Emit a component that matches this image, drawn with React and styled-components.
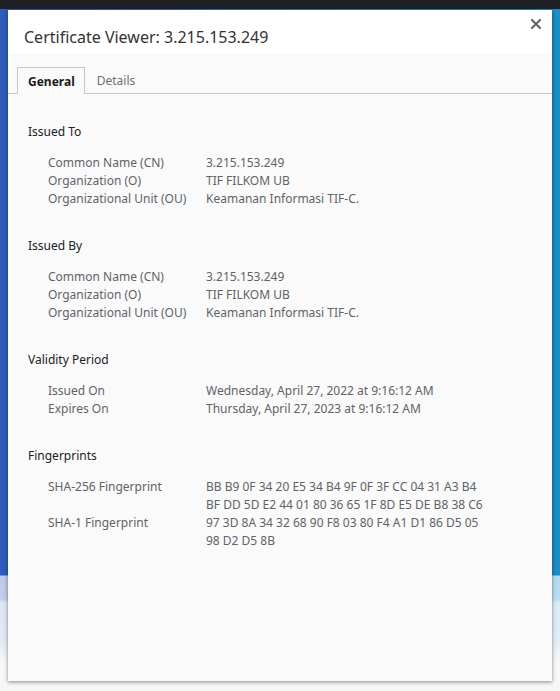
import React from "react";
import styled, { createGlobalStyle } from "styled-components";

const GlobalStyle = createGlobalStyle`
  html, body {
    margin: 0;
    padding: 0;
    background: #f5f5f5;
  }
  body {
    font-family: "Noto Sans", "Open Sans", sans-serif;
  }
`;

const Page = styled.div`
  width: 560px;
  height: 691px;
  overflow: hidden;
  display: flex;
  flex-direction: column;
`;

const TopBar = styled.div`
  height: 9px;
  background: #1f2024;
  flex-shrink: 0;
`;

const Stage = styled.div`
  flex: 1;
  padding: 1px 8px 0;
  background:
    linear-gradient(
      to bottom,
      rgba(255, 255, 255, 0) 0,
      rgba(255, 255, 255, 0) 566px,
      rgba(255, 255, 255, 0.68) 567px,
      rgba(255, 255, 255, 0.7) 590px,
      rgba(255, 255, 255, 0.84) 594px,
      rgba(255, 255, 255, 0.86) 630px,
      rgba(247, 247, 247, 1) 652px
    ),
    linear-gradient(to right, #2e5ab9, #1a8dc6);
`;

const Dialog = styled.div`
  width: 544px;
  height: 671px;
  box-sizing: border-box;
  background: #fafafa;
  box-shadow: 0 1px 4px rgba(0, 0, 0, 0.45);
  display: flex;
  flex-direction: column;
`;

const Header = styled.div`
  height: 43px;
  background: #ffffff;
  display: flex;
  align-items: flex-end;
  justify-content: space-between;
  padding: 0 9px 0 16px;
  flex-shrink: 0;
`;

const Title = styled.h1`
  margin: 0 0 4px;
  font-size: 16px;
  font-weight: 400;
  line-height: 24px;
  color: #333333;
`;

const CloseButton = styled.button`
  align-self: flex-start;
  margin-top: 7px;
  width: 14px;
  height: 14px;
  padding: 0;
  border: none;
  background: none;
  display: flex;
  align-items: center;
  justify-content: center;
  cursor: pointer;
`;

const TabStrip = styled.div`
  display: flex;
  align-items: flex-end;
  padding: 14px 0 0 9px;
  border-bottom: 1px solid #c6c6c6;
`;

const Tab = styled.div`
  padding: 0 ${(props) => (props.active ? "9px 0 10px" : "10px 0 11px")};
  box-sizing: border-box;
  display: flex;
  align-items: center;
  font-size: 12px;
  font-weight: ${(props) => (props.active ? 700 : 400)};
  color: ${(props) => (props.active ? "#1a1a1a" : "#6b6e73")};
  background: #fafafa;
  border: 1px solid ${(props) => (props.active ? "#c6c6c6" : "transparent")};
  border-bottom: none;
  margin-bottom: ${(props) => (props.active ? "-1px" : "0")};
  height: ${(props) => (props.active ? "27px" : "26px")};
`;

const Content = styled.div`
  padding: 29px 20px 0;
  display: flex;
  flex-direction: column;
  gap: 29px;
`;

const Section = styled.section`
  display: flex;
  flex-direction: column;
  gap: 13px;
`;

const Heading = styled.h2`
  margin: 0;
  font-size: 12px;
  font-weight: 400;
  line-height: 18px;
  color: #202124;
`;

const Fields = styled.div`
  display: grid;
  grid-template-columns: 158px 1fr;
  padding-left: 20px;
  font-size: 12px;
  line-height: 18px;
  color: #5f6368;
`;

const Label = styled.div``;

const Value = styled.div`
  display: flex;
  flex-direction: column;
`;

const sections = [
  {
    title: "Issued To",
    fields: [
      ["Common Name (CN)", ["3.215.153.249"]],
      ["Organization (O)", ["TIF FILKOM UB"]],
      ["Organizational Unit (OU)", ["Keamanan Informasi TIF-C."]],
    ],
  },
  {
    title: "Issued By",
    fields: [
      ["Common Name (CN)", ["3.215.153.249"]],
      ["Organization (O)", ["TIF FILKOM UB"]],
      ["Organizational Unit (OU)", ["Keamanan Informasi TIF-C."]],
    ],
  },
  {
    title: "Validity Period",
    fields: [
      ["Issued On", ["Wednesday, April 27, 2022 at 9:16:12 AM"]],
      ["Expires On", ["Thursday, April 27, 2023 at 9:16:12 AM"]],
    ],
  },
  {
    title: "Fingerprints",
    fields: [
      [
        "SHA-256 Fingerprint",
        [
          "BB B9 0F 34 20 E5 34 B4 9F 0F 3F CC 04 31 A3 B4",
          "BF DD 5D E2 44 01 80 36 65 1F 8D E5 DE B8 38 C6",
        ],
      ],
      [
        "SHA-1 Fingerprint",
        ["97 3D 8A 34 32 68 90 F8 03 80 F4 A1 D1 86 D5 05", "98 D2 D5 8B"],
      ],
    ],
  },
];

function CloseIcon() {
  return (
    <svg width="10" height="10" viewBox="0 0 10 10">
      <path
        d="M1 1 L9 9 M9 1 L1 9"
        stroke="#5f6368"
        strokeWidth="2"
        strokeLinecap="square"
      />
    </svg>
  );
}

export default function App() {
  return (
    <Page>
      <GlobalStyle />
      <TopBar />
      <Stage>
        <Dialog>
          <Header>
            <Title>Certificate Viewer: 3.215.153.249</Title>
            <CloseButton aria-label="Close">
              <CloseIcon />
            </CloseButton>
          </Header>
          <TabStrip>
            <Tab active>General</Tab>
            <Tab>Details</Tab>
          </TabStrip>
          <Content>
            {sections.map((section) => (
              <Section key={section.title}>
                <Heading>{section.title}</Heading>
                <Fields>
                  {section.fields.map(([label, lines]) => (
                    <React.Fragment key={label}>
                      <Label>{label}</Label>
                      <Value>
                        {lines.map((line) => (
                          <span key={line}>{line}</span>
                        ))}
                      </Value>
                    </React.Fragment>
                  ))}
                </Fields>
              </Section>
            ))}
          </Content>
        </Dialog>
      </Stage>
    </Page>
  );
}
